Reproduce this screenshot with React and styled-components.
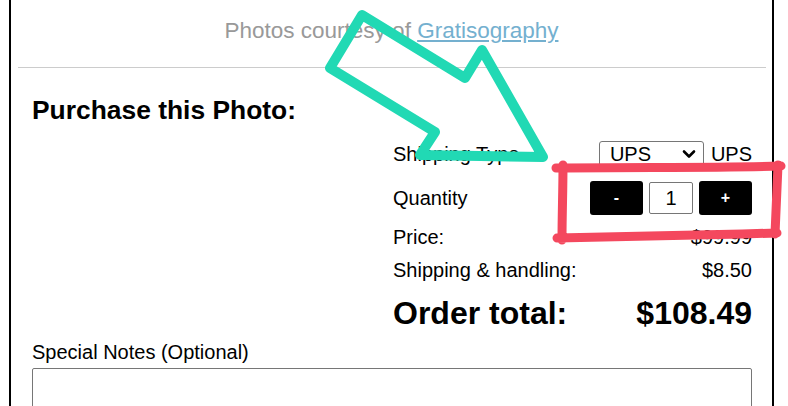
import React from "react";
import styled, { createGlobalStyle } from "styled-components";

const Global = createGlobalStyle`
  html, body { margin: 0; padding: 0; background: #fff; }
  body { font-family: "Liberation Sans", Arial, sans-serif; color: #000; }
`;

const Stage = styled.div`
  position: relative;
  width: 788px;
  height: 406px;
  overflow: hidden;
`;

const Frame = styled.div`
  box-sizing: border-box;
  margin-left: 9px;
  width: 765px;
  min-height: 406px;
  border-left: 2px solid #000;
  border-right: 2px solid #000;
`;

const Caption = styled.p`
  margin: 0;
  padding-top: 16px;
  line-height: 30px;
  font-size: 22.5px;
  color: #999;
  text-align: center;
`;

const CreditLink = styled.a`
  color: #74b0cf;
  text-decoration: underline;
`;

const Rule = styled.hr`
  margin: 21px 6px 0 7px;
  border: 0;
  border-top: 1px solid #ccc;
  height: 0;
`;

const Form = styled.form`
  padding: 0 20px 0 21px;
`;

const Heading = styled.h3`
  margin: 26px 0 0;
  font-size: 26.4px;
  line-height: 32px;
  font-weight: 700;
`;

const Table = styled.div`
  margin: 8px 0 0 auto;
  width: 359px;
  display: flex;
  flex-direction: column;
`;

const Row = styled.div`
  display: grid;
  grid-template-columns: 1fr auto;
  align-items: center;
  height: ${(p) => p.$h}px;
  font-size: ${(p) => (p.$big ? 32 : 20)}px;
  font-weight: ${(p) => (p.$big ? 700 : 400)};
`;

const Value = styled.div`
  display: flex;
  align-items: center;
  justify-content: flex-end;
  gap: ${(p) => p.$gap || 0}px;
`;

const SelectWrap = styled.div`
  position: relative;
  display: flex;
`;

const Select = styled.select`
  box-sizing: border-box;
  appearance: none;
  -webkit-appearance: none;
  width: 105px;
  height: 27px;
  font-family: "Liberation Sans", Arial, sans-serif;
  font-size: 20px;
  line-height: 25px;
  color: #000;
  background: #fff;
  border: 1px solid #767676;
  border-radius: 3px;
  padding: 0 2px 0 10px;
`;

const Chevron = styled.svg`
  position: absolute;
  right: 8px;
  top: 8px;
  pointer-events: none;
`;

const StepButton = styled.button`
  box-sizing: border-box;
  width: 53px;
  height: 34px;
  border: 0;
  border-radius: 3px;
  background: #000;
  color: #fff;
  font-family: "Liberation Sans", Arial, sans-serif;
  font-size: 16px;
  font-weight: 700;
  padding: 0;
`;

const QtyInput = styled.input`
  box-sizing: border-box;
  width: 44px;
  height: 32px;
  border: 1px solid #767676;
  border-radius: 2px;
  text-align: center;
  font-family: "Liberation Sans", Arial, sans-serif;
  font-size: 20px;
  padding: 0;
`;

const NotesLabel = styled.label`
  display: block;
  margin-top: 1px;
  font-size: 20px;
  line-height: 24px;
`;

const Notes = styled.textarea`
  display: block;
  box-sizing: border-box;
  margin-top: 4px;
  width: 100%;
  height: 90px;
  border: 1px solid #767676;
  border-radius: 2px;
  resize: none;
`;

const Annotations = styled.svg`
  position: absolute;
  top: 0;
  left: 0;
  pointer-events: none;
`;

export default function App() {
  return (
    <Stage>
      <Global />
      <Frame>
        <Caption>
          Photos courtesy of <CreditLink href="#">Gratisography</CreditLink>
        </Caption>
        <Rule />
        <Form onSubmit={(e) => e.preventDefault()}>
          <Heading>Purchase this Photo:</Heading>
          <Table>
            <Row $h={41}>
              <span>Shipping Type</span>
              <Value $gap={7}>
                <SelectWrap>
                  <Select defaultValue="UPS">
                    <option>UPS</option>
                    <option>FedEx</option>
                    <option>USPS</option>
                  </Select>
                  <Chevron width="14" height="10" viewBox="0 0 14 10">
                    <path
                      d="M2,2.5 L7,7.5 L12,2.5"
                      fill="none"
                      stroke="#000"
                      strokeWidth="2.6"
                      strokeLinecap="round"
                      strokeLinejoin="round"
                    />
                  </Chevron>
                </SelectWrap>
                <span>UPS</span>
              </Value>
            </Row>
            <Row $h={46}>
              <span>Quantity</span>
              <Value $gap={6}>
                <StepButton type="button">-</StepButton>
                <QtyInput defaultValue="1" />
                <StepButton type="button">+</StepButton>
              </Value>
            </Row>
            <Row $h={32}>
              <span>Price:</span>
              <Value>$99.99</Value>
            </Row>
            <Row $h={34}>
              <span>Shipping &amp; handling:</span>
              <Value>$8.50</Value>
            </Row>
            <Row $h={52} $big>
              <span>Order total:</span>
              <Value>$108.49</Value>
            </Row>
          </Table>
          <NotesLabel>Special Notes (Optional)</NotesLabel>
          <Notes />
        </Form>
      </Frame>
      <Annotations width="788" height="406" viewBox="0 0 788 406">
        <polygon
          points="362,15 465,78 482,50 543,157 420,155 435,132 330,68"
          fill="none"
          stroke="#21d9b4"
          strokeWidth="10"
          strokeLinejoin="round"
        />
        <path
          d="M556,168 C640,167 720,168 781,166 M778,165 C777,190 776,215 775,234 M777,233 C700,235 620,237 557,238 M563,165 C563,190 562,215 562,240"
          fill="none"
          stroke="#f4485e"
          strokeWidth="9"
          strokeLinecap="round"
        />
      </Annotations>
    </Stage>
  );
}
